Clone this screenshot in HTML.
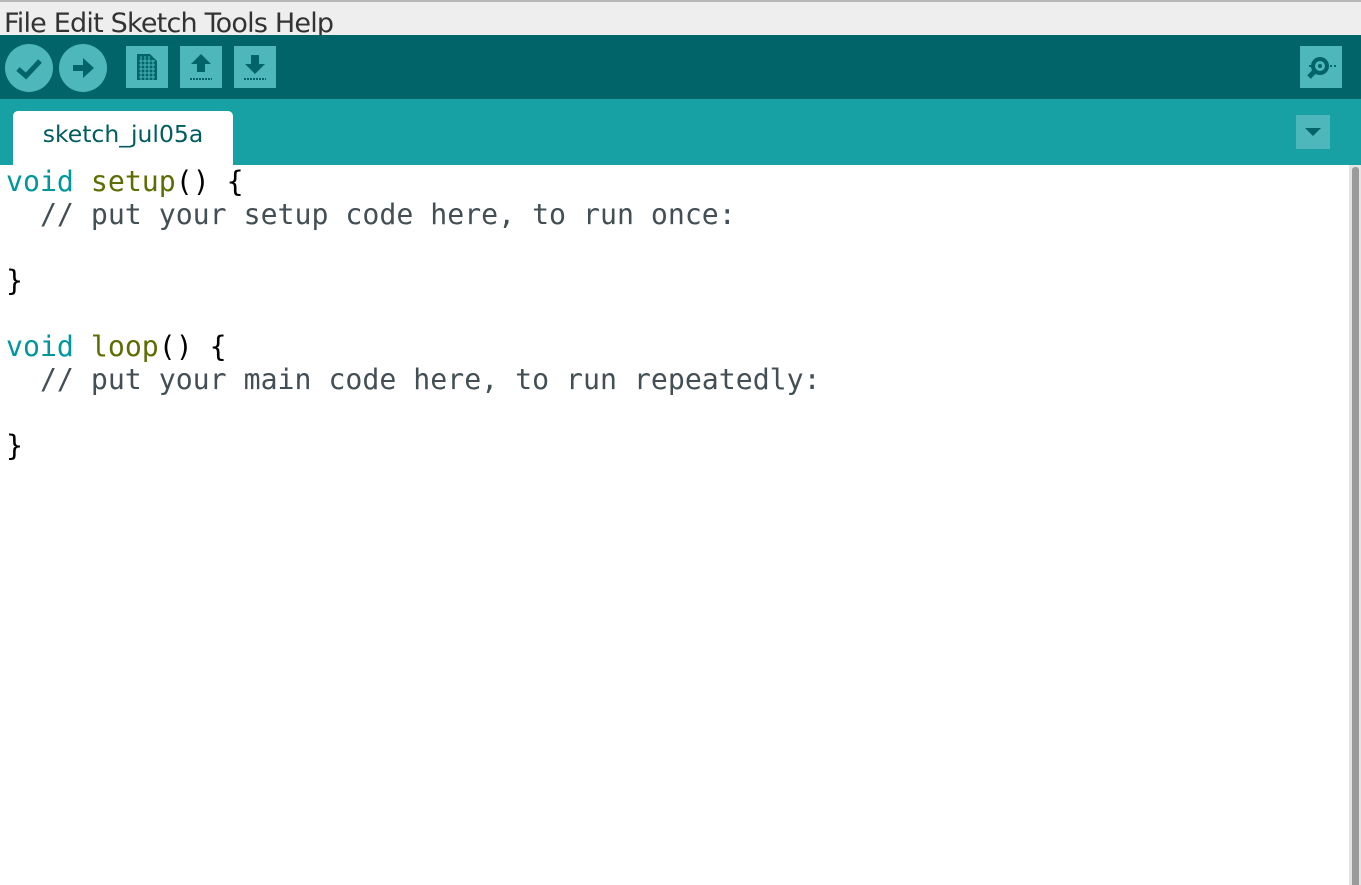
<!DOCTYPE html>
<html><head><meta charset="utf-8"><style>
*{margin:0;padding:0;box-sizing:border-box}
body{width:1361px;height:885px;overflow:hidden;background:#fff;position:relative;font-family:"Liberation Sans",sans-serif}
.menu{position:absolute;left:0;top:0;width:1361px;height:35px;background:#eeeeee;border-top:2px solid #b8b8b8;overflow:hidden}
.menu span{position:absolute;left:4px;top:5px;color:#333;letter-spacing:-0.8px;font-family:"DejaVu Sans",sans-serif;font-size:27px;line-height:34px}
.tool{position:absolute;left:0;top:35px;width:1361px;height:64px;background:#006468}
.tabs{position:absolute;left:0;top:99px;width:1361px;height:66px;background:#17a1a5}
.c{position:absolute;width:48px;height:48px;border-radius:50%;background:#4db7bb;top:44px}
.s{position:absolute;width:42px;height:42px;background:#4db7bb;top:46px}
.tab{position:absolute;left:13px;top:111px;width:220px;height:54px;background:#fff;border-radius:5px 5px 0 0;color:#005c5f;text-align:center;line-height:46px;font-family:"DejaVu Sans",sans-serif;font-size:23.5px}
.dd{position:absolute;left:1296px;top:115px;width:34px;height:34px;background:#4db7bb}
pre{position:absolute;left:6px;top:165px;font-family:"DejaVu Sans Mono",monospace;font-size:28.2px;line-height:33px;color:#000}
.k{color:#00979c}.f{color:#5e6d03}.m{color:#434f54}
.sb{position:absolute;left:1349px;top:165px;width:12px;height:720px;background:#e4e4e4}
.th{position:absolute;left:1352px;top:167px;width:7px;height:718px;background:#9a9a9a;border-radius:3px 3px 0 0}
</style></head><body>
<div class="menu"><span>File Edit Sketch Tools Help</span></div>
<div class="tool"></div>
<div class="c" style="left:5px"></div>
<div class="c" style="left:59px"></div>
<svg style="position:absolute;left:5px;top:44px" width="48" height="48"><path d="M13 25 L21 32 L35 17" stroke="#006468" stroke-width="5" fill="none"/></svg>
<svg style="position:absolute;left:59px;top:44px" width="48" height="48"><path d="M14 21h10v-7l11 10-11 10v-7H14z" fill="#006468"/></svg>
<div class="s" style="left:126px"></div>
<div class="s" style="left:180px"></div>
<div class="s" style="left:234px"></div>
<div class="s" style="left:1300px"></div>
<svg style="position:absolute;left:126px;top:46px" width="42" height="42"><path d="M11 8h13l7 7v19H11z" fill="#006468"/><path d="M13 15h16M13 19h16M13 23h16M13 27h16M13 31h16M15 10v24M19 10v24M23 10v24M27 14v20" stroke="#4db7bb" stroke-width="1"/></svg>
<svg style="position:absolute;left:180px;top:46px" width="42" height="42"><path d="M21 8l10 10h-6v8h-8v-8h-6z" fill="#006468"/><path d="M10 33h22" stroke="#006468" stroke-width="2" stroke-dasharray="2 1"/></svg>
<svg style="position:absolute;left:234px;top:46px" width="42" height="42"><path d="M21 28l10-10h-6v-9h-8v9h-6z" fill="#006468"/><path d="M10 33h22" stroke="#006468" stroke-width="2" stroke-dasharray="2 1"/></svg>
<svg style="position:absolute;left:1300px;top:46px" width="42" height="42"><circle cx="20" cy="20" r="7" stroke="#006468" stroke-width="4" fill="none"/><circle cx="20" cy="20" r="2" fill="#006468"/><path d="M15 25l-6 6" stroke="#006468" stroke-width="5"/><rect x="9" y="19" width="2" height="2" fill="#006468"/><rect x="30" y="19" width="2" height="2" fill="#006468"/><rect x="34" y="19" width="2" height="2" fill="#006468"/></svg>
<div class="tabs"></div>
<div class="tab">sketch_jul05a</div>
<div class="dd"><svg width="34" height="34"><path d="M9 13h16l-8 8z" fill="#006468"/></svg></div>
<pre><span class="k">void</span> <span class="f">setup</span>() {
  <span class="m">// put your setup code here, to run once:</span>

}

<span class="k">void</span> <span class="f">loop</span>() {
  <span class="m">// put your main code here, to run repeatedly:</span>

}</pre>
<div class="sb"></div><div class="th"></div>
</body></html>
